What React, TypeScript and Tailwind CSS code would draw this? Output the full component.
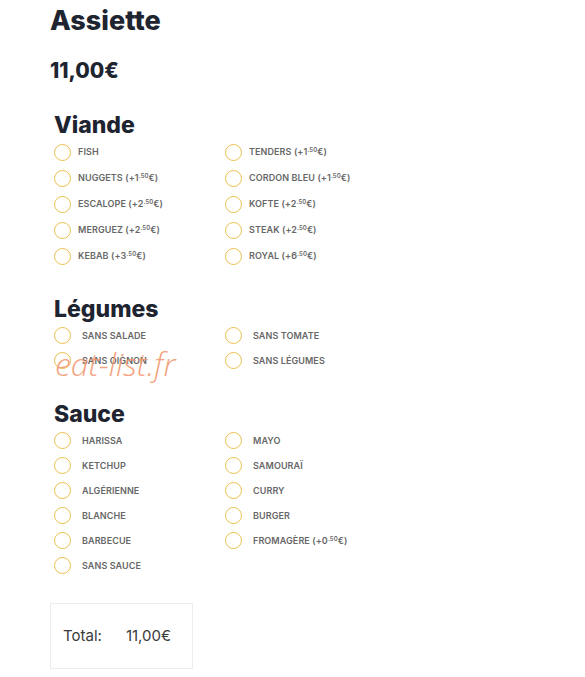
import React from 'react';

type Option = { label: string; base?: string; cents?: string };

const viande: Option[][] = [
  [{ label: 'FISH' }, { label: 'TENDERS', base: '+1', cents: '50' }],
  [{ label: 'NUGGETS', base: '+1', cents: '50' }, { label: 'CORDON BLEU', base: '+1', cents: '50' }],
  [{ label: 'ESCALOPE', base: '+2', cents: '50' }, { label: 'KOFTE', base: '+2', cents: '50' }],
  [{ label: 'MERGUEZ', base: '+2', cents: '50' }, { label: 'STEAK', base: '+2', cents: '50' }],
  [{ label: 'KEBAB', base: '+3', cents: '50' }, { label: 'ROYAL', base: '+6', cents: '50' }],
];

const legumes: Option[][] = [
  [{ label: 'SANS SALADE' }, { label: 'SANS TOMATE' }],
  [{ label: 'SANS OIGNON' }, { label: 'SANS LÉGUMES' }],
];

const sauces: Option[][] = [
  [{ label: 'HARISSA' }, { label: 'MAYO' }],
  [{ label: 'KETCHUP' }, { label: 'SAMOURAÏ' }],
  [{ label: 'ALGÉRIENNE' }, { label: 'CURRY' }],
  [{ label: 'BLANCHE' }, { label: 'BURGER' }],
  [{ label: 'BARBECUE' }, { label: 'FROMAGÈRE', base: '+0', cents: '50' }],
  [{ label: 'SANS SAUCE' }],
];

function Radio({ opt, gap }: { opt: Option; gap: string }) {
  return (
    <label className={`flex items-center ${gap} cursor-pointer`}>
      <span className="w-[17px] h-[17px] rounded-full border-[1.5px] border-[#e8c04c] shrink-0" />
      <span className="text-[9px] font-semibold text-[#676767] tracking-[0.01em] whitespace-nowrap">
        {opt.label}
        {opt.base && (
          <>
            {' ('}
            {opt.base}
            <span className="text-[6px] align-[3px]">.{opt.cents}</span>€)
          </>
        )}
      </span>
    </label>
  );
}

function Group({
  title,
  rows,
  rowH,
  gap,
  className = '',
}: {
  title: string;
  rows: Option[][];
  rowH: string;
  gap: string;
  className?: string;
}) {
  return (
    <section className={`pl-[4px] ${className}`}>
      <h3 className="text-[23px] leading-[26px] font-extrabold text-[#1e2430]">{title}</h3>
      <div className="mt-[1px]">
        {rows.map((row, i) => (
          <div key={i} className={`grid grid-cols-[171px_1fr] items-center ${rowH}`}>
            {row.map((o) => (
              <Radio key={o.label} opt={o} gap={gap} />
            ))}
          </div>
        ))}
      </div>
    </section>
  );
}

export default function App() {
  return (
    <div className="min-h-[677px] bg-white pl-[50px] pt-[4px] font-['Inter',sans-serif] relative">
      <h1 className="text-[27px] leading-[34px] font-extrabold text-[#1e2430]">Assiette</h1>
      <p className="mt-[20px] text-[21px] leading-[26px] font-extrabold text-[#1e2430]">11,00€</p>

      <Group title="Viande" rows={viande} rowH="h-[26px]" gap="gap-[7px]" className="mt-[28px]" />
      <Group title="Légumes" rows={legumes} rowH="h-[25px]" gap="gap-[11px]" className="mt-[27px]" />
      <Group title="Sauce" rows={sauces} rowH="h-[25px]" gap="gap-[11px]" className="mt-[28px]" />

      <div className="mt-[25px] w-[143px] h-[66px] border border-[#ececec] flex items-center gap-[24px] pl-[12px] text-[15px] text-[#3a3a3a]">
        <span>Total:</span>
        <span>11,00€</span>
      </div>

      {/* site watermark */}
      <span className="absolute left-[55px] top-[340px] text-[32px] italic font-light text-[#f29a72] opacity-90 font-['Open_Sans',sans-serif] pointer-events-none">
        eat-list.fr
      </span>
    </div>
  );
}
